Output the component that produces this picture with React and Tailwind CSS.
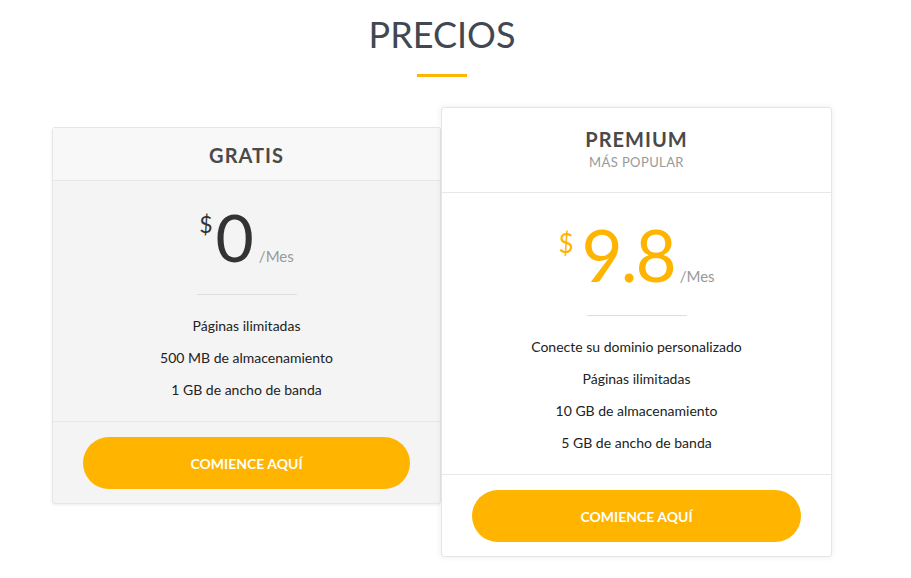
const plans = [
  {
    name: 'GRATIS',
    price: '0',
    features: ['Páginas ilimitadas', '500 MB de almacenamiento', '1 GB de ancho de banda'],
  },
  {
    name: 'PREMIUM',
    tag: 'MÁS POPULAR',
    price: '9.8',
    featured: true,
    features: [
      'Conecte su dominio personalizado',
      'Páginas ilimitadas',
      '10 GB de almacenamiento',
      '5 GB de ancho de banda',
    ],
  },
];

function PlanCard({ plan }) {
  const featured = plan.featured;
  return (
    <div
      className={`flex flex-col rounded-[3px] border border-[#e6e6e6] ${
        featured
          ? 'w-[391px] bg-white shadow-[0_0_6px_rgba(0,0,0,0.08)] relative z-10'
          : 'w-[389px] bg-[#f4f4f4] mt-[20px] shadow-[0_1px_3px_rgba(0,0,0,0.08)]'
      }`}
    >
      <div
        className={`text-center border-b border-[#e8e8e8] ${
          featured ? 'pt-[19px] pb-[21px]' : 'bg-[#f8f8f8] pt-[15px] pb-[13px]'
        }`}
      >
        <h3 className="text-[20px] leading-6 font-bold tracking-[1px] text-[#4a4a4a]">{plan.name}</h3>
        {plan.tag && (
          <p className="mt-[2px] text-[13px] leading-[18px] tracking-[0.4px] text-[#999]">{plan.tag}</p>
        )}
      </div>

      <div className={`pb-[15px] flex flex-col items-center ${featured ? 'pt-[26px]' : 'pt-[23px]'}`}>
        <div className={`flex items-baseline ${featured ? 'text-[#ffb400]' : 'text-[#333]'}`}>
          <span
            className={`self-start leading-none ${
              featured ? 'text-[26px] mt-[11px] mr-[8px]' : 'text-[23px] mt-[9px] mr-[3px]'
            }`}
          >
            $
          </span>
          <span className={`leading-none ${featured ? 'text-[71px] tracking-[-2px]' : 'text-[66px]'}`}>
            {plan.price}
          </span>
          <span className={`text-[15px] text-[#999] ${featured ? 'ml-[5px]' : 'ml-[5px]'}`}>/Mes</span>
        </div>
        <div className={`mb-[15px] w-[100px] h-px bg-[#dedede] ${featured ? 'mt-[25px]' : 'mt-[24px]'}`} />
        <ul className="text-center text-[14px] leading-8 text-[#222]">
          {plan.features.map((f) => (
            <li key={f}>{f}</li>
          ))}
        </ul>
      </div>

      <div className="border-t border-[#e8e8e8] pt-[15px] pb-[14px] pl-[30px] pr-[30px]">
        <button className="w-full h-[52px] rounded-full bg-[#ffb400] text-white text-[14px] font-bold">
          COMIENCE AQUÍ
        </button>
      </div>
    </div>
  );
}

export default function App() {
  return (
    <div className="w-[911px] h-[578px] bg-white font-['Lato','Liberation_Sans',sans-serif]">
      <div className="w-[780px] ml-[52px] flex flex-col items-center">
        <h2 className="pt-[12px] text-[36px] leading-[44px] text-[#414851]">PRECIOS</h2>
        <div className="mt-[18px] w-[50px] h-[3px] bg-[#ffb400]" />
        <div className="mt-[30px] flex items-start">
          {plans.map((p) => (
            <PlanCard key={p.name} plan={p} />
          ))}
        </div>
      </div>
    </div>
  );
}
